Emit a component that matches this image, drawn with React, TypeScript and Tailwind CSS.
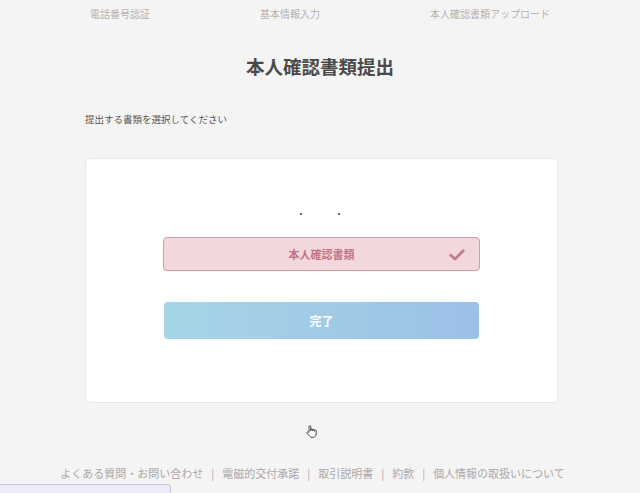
import React from "react";

const steps = ["電話番号認証", "基本情報入力", "本人確認書類アップロード"];
const links = [
  "よくある質問・お問い合わせ",
  "電磁的交付承諾",
  "取引説明書",
  "約款",
  "個人情報の取扱いについて",
];

const CheckIcon = () => (
  <svg width="16" height="12" viewBox="0 0 16 12" fill="none">
    <path
      d="M1.8 6.2 L6 10 L14.2 1.8"
      stroke="#c47b8b"
      strokeWidth="2.8"
      strokeLinecap="round"
      strokeLinejoin="round"
    />
  </svg>
);

const HandCursor = () => (
  <svg width="12" height="13" viewBox="0 0 12 13" fill="none">
    <path
      d="M3 7 V1.6 a0.9 0.9 0 0 1 1.8 0 V6 V4.8 a0.9 0.9 0 0 1 1.8 0 V6 V5.3 a0.9 0.9 0 0 1 1.8 0 V6.3 V6 a0.9 0.9 0 0 1 1.8 0 V9 c0 2 -1.4 3.3 -3.3 3.3 H6 c-1.3 0 -2 -0.6 -2.8 -1.6 L1 8.2 c-0.5 -0.6 0.3 -1.5 1 -1 Z"
      fill="#fff"
      stroke="#333"
      strokeWidth="0.9"
      strokeLinejoin="round"
    />
  </svg>
);

export default function App() {
  return (
    <div
      className="relative min-h-screen bg-[#f5f4f5] text-[#444]"
      style={{ fontFamily: '"Noto Sans CJK JP", "Noto Sans", sans-serif' }}
    >
      {/* step labels */}
      <div className="flex justify-between px-[90px] pt-[7px] text-[10px] leading-[14px] text-[#b3b1b3]">
        {steps.map((s) => (
          <span key={s}>{s}</span>
        ))}
      </div>

      <h1 className="mt-[32px] text-center text-[18.5px] font-bold leading-[26px] text-[#4a4a4a]">
        本人確認書類提出
      </h1>

      <div className="ml-[85px] w-[473px]">
        <p className="mt-[33px] text-[9.5px] leading-[14px] text-[#555]">
          提出する書類を選択してください
        </p>

        <div className="mt-[32px] rounded-[4px] border border-[#e8e6e8] bg-white pb-[63px] pt-[54px]">
          <div className="flex justify-center gap-[36px] pr-[3px]">
            <span className="h-[2px] w-[2px] rounded-full bg-[#333]" />
            <span className="h-[2px] w-[2px] rounded-full bg-[#333]" />
          </div>

          <button className="relative mx-auto mt-[22px] flex h-[34px] w-[317px] items-center justify-center rounded-[4px] border border-[#d59aa6] bg-[#f2d7dc] text-[11px] font-bold text-[#c27584]">
            本人確認書類
            <span className="absolute right-[14px] top-[11px]">
              <CheckIcon />
            </span>
          </button>

          <button className="mx-auto mt-[31px] flex h-[37px] w-[315px] items-center justify-center rounded-[4px] bg-gradient-to-r from-[#a6d5e7] to-[#9bc1e7] text-[12px] font-bold text-white">
            完了
          </button>
        </div>
      </div>

      <div className="ml-[306px] mt-[22px] h-[13px]">
        <HandCursor />
      </div>

      <div className="mt-[27px] flex justify-center gap-[8px] pr-[15px] text-[11px] leading-[16px] text-[#a9a7a9]">
        {links.map((l, i) => (
          <React.Fragment key={l}>
            {i > 0 && <span>|</span>}
            <span>{l}</span>
          </React.Fragment>
        ))}
      </div>

      <div className="fixed bottom-[-20px] left-0 h-[29px] w-[171px] rounded-tr-[4px] border border-l-0 border-[#c9c5d6] bg-[#eeebf8]" />
    </div>
  );
}
